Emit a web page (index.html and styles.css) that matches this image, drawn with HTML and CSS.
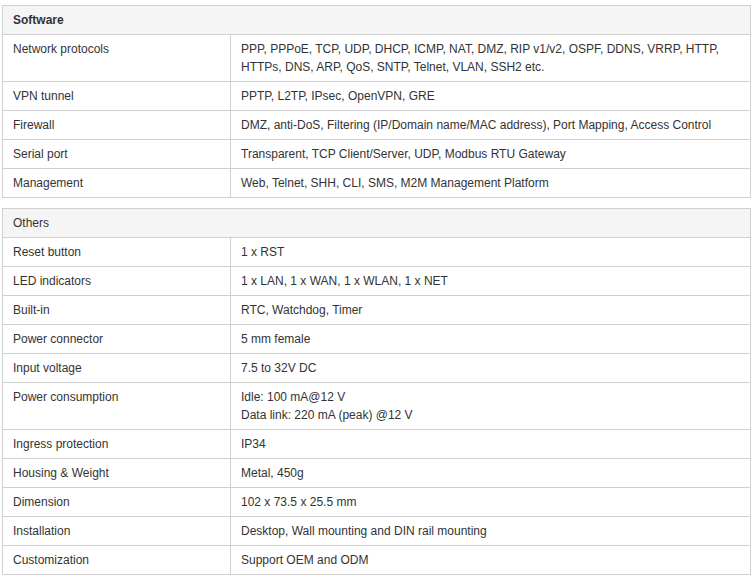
FILE: index.html
```html
<!DOCTYPE html>
<html>
<head>
<meta charset="utf-8">
<link rel="stylesheet" href="styles.css">
</head>
<body>
<div class="page">
<table class="spec">
  <colgroup><col class="c1"><col class="c2"></colgroup>
  <tr><th colspan="2" class="head bold">Software</th></tr>
  <tr><td>Network protocols</td><td>PPP, PPPoE, TCP, UDP, DHCP, ICMP, NAT, DMZ, RIP v1/v2, OSPF, DDNS, VRRP, HTTP, HTTPs, DNS, ARP, QoS, SNTP, Telnet, VLAN, SSH2 etc.</td></tr>
  <tr><td>VPN tunnel</td><td>PPTP, L2TP, IPsec, OpenVPN, GRE</td></tr>
  <tr><td>Firewall</td><td>DMZ, anti-DoS, Filtering (IP/Domain name/MAC address), Port Mapping, Access Control</td></tr>
  <tr><td>Serial port</td><td>Transparent, TCP Client/Server, UDP, Modbus RTU Gateway</td></tr>
  <tr><td>Management</td><td>Web, Telnet, SHH, CLI, SMS, M2M Management Platform</td></tr>
</table>
<table class="spec">
  <colgroup><col class="c1"><col class="c2"></colgroup>
  <tr><th colspan="2" class="head">Others</th></tr>
  <tr><td>Reset button</td><td>1 x RST</td></tr>
  <tr><td>LED indicators</td><td>1 x LAN, 1 x WAN, 1 x WLAN, 1 x NET</td></tr>
  <tr><td>Built-in</td><td>RTC, Watchdog, Timer</td></tr>
  <tr><td>Power connector</td><td>5 mm female</td></tr>
  <tr><td>Input voltage</td><td>7.5 to 32V DC</td></tr>
  <tr><td>Power consumption</td><td>Idle: 100 mA@12 V<br>Data link: 220 mA (peak) @12 V</td></tr>
  <tr><td>Ingress protection</td><td>IP34</td></tr>
  <tr><td>Housing &amp; Weight</td><td>Metal, 450g</td></tr>
  <tr><td>Dimension</td><td>102 x 73.5 x 25.5 mm</td></tr>
  <tr><td>Installation</td><td>Desktop, Wall mounting and DIN rail mounting</td></tr>
  <tr><td>Customization</td><td>Support OEM and ODM</td></tr>
</table>
</div>
</body>
</html>
```
FILE: styles.css
```css
html, body {
  margin: 0;
  padding: 0;
  background: #ffffff;
}
.page {
  padding: 5px 0 0 2px;
  font-family: "Liberation Sans", Arial, sans-serif;
  font-size: 12px;
  color: #333333;
}
.spec {
  width: 749px;
  border-collapse: collapse;
  table-layout: fixed;
  margin-bottom: 10px;
}
.c1 { width: 228px; }
.spec th, .spec td {
  border: 1px solid #d0d0d0;
  padding: 5px 10px;
  line-height: 18px;
  text-align: left;
  vertical-align: top;
  font-weight: normal;
}
.spec .head {
  background: #f5f5f5;
}
.spec .bold {
  font-weight: bold;
}
```
